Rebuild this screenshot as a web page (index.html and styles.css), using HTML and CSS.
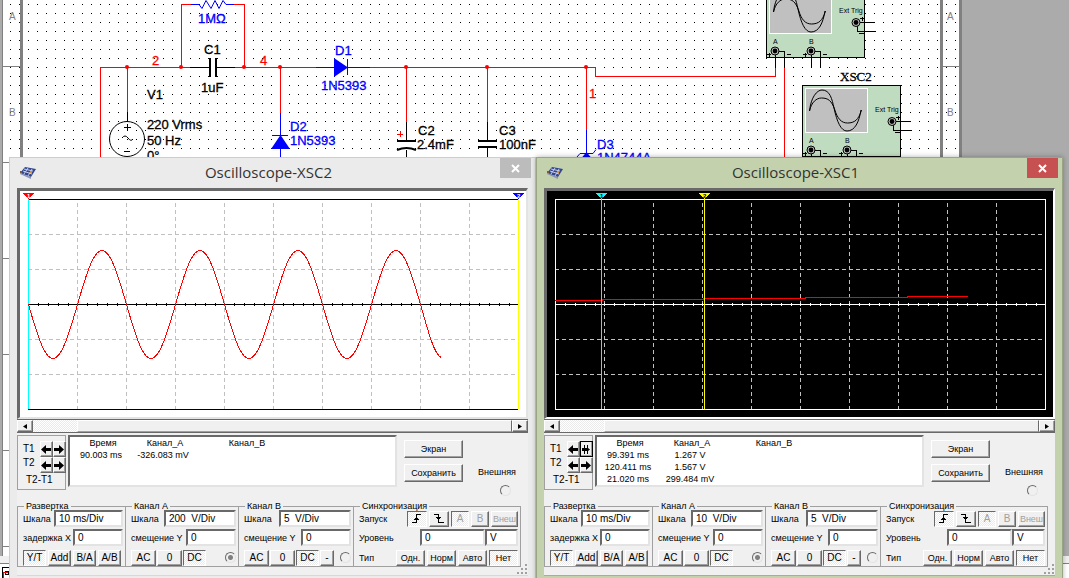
FILE: index.html
```html
<!DOCTYPE html>
<html lang="ru">
<head>
  <meta charset="UTF-8">
  <meta name="viewport" content="width=device-width, initial-scale=1.0">
  <title>Oscilloscope</title>
  <link rel="stylesheet" href="styles.css">
</head>
<body>
  <div class="desktop">
    <svg class="schematic" width="1069" height="578" viewBox="0 0 1069 578">
      <defs>
        <pattern id="dots" x="10" y="4" width="9" height="9" patternUnits="userSpaceOnUse">
          <rect width="1" height="1" fill="#000"/>
        </pattern>
        <g id="probe">
          <circle r="4" fill="#c0c0c0" stroke="#000"/>
          <circle r="2.4" fill="#000"/>
        </g>
        <g id="scope">
          <rect class="box" x="802.5" y="30.5" width="98" height="126" />
          <rect class="lcd" x="805.5" y="43.5" width="62" height="89"/>
          <path class="thin" d="M809.5 111C811 97 817 90 822 90c8 0 10 9 12 18 3 14 7 23 13 23 8 0 12-9 14-21M809.5 111c2-9 7-13 12-13 7 0 10 3 13 11 3 10 7 14 13 14 7 0 11-3 14-13"/>
          <g class="crisp">
            <path class="black" d="M892 121.500h19M893.500 121v9.500h18M811.500 149v18M811 150.500h9.500v16.500M847.500 149v18M847 150.500h9.500v16.500"/>
            <path class="black" d="M896 117.500h4M898.500 116v4M895 132.500h5M803 153.500h4M805.500 152v4M823 153.500h4M839 153.500h4M841.500 152v4M859 153.500h4"/>
          </g>
          <use href="#probe" x="892" y="121.500"/>
          <use href="#probe" x="811" y="150"/>
          <use href="#probe" x="847" y="150"/>
          <text class="tiny" x="875" y="112">Ext Trig</text>
          <text class="tiny" x="809" y="143">A</text>
          <text class="tiny" x="845" y="143">B</text>
        </g>
      </defs>

      <!-- sheet -->
      <rect x="3" y="0" width="959" height="556" fill="#fff"/>
      <rect x="3" y="0" width="959" height="556" fill="url(#dots)"/>
      <path fill="#808080" d="M2 0h1v556h-1zM20 0h3v556h-3zM940 0h3v556h-3zM959 0h3v556h-3z"/>
      <path class="tick" d="M3 66.500h17M3 162.500h17M3 258.500h17M3 354.500h17M3 450.500h17M3 546.500h17M943 66.500h16"/>
      <g class="zone">
        <text x="9" y="20">A</text><text x="9" y="116">B</text>
        <text x="947" y="20">A</text><text x="947" y="116">B</text>
      </g>
      <rect y="556" width="1069" height="22" fill="#f0f0f0"/>
      <rect y="564" width="1069" height="14" fill="#fff"/>
      <path class="tick" d="M0 563.500h1069"/>
      <path class="black crisp" d="M2.500 578v-10.500h6M5 571.500h3v3h-3z"/>
      <path class="red crisp" d="M3 578v-5.500h5"/>

      <!-- wires -->
      <g class="crisp">
        <path class="red" d="M191 4.500h-9.500V67M234 4.500h10.500V67M100.500 157V67.500H190M127.500 67v45M235 67.500h81M280.500 67v46M370 67.500h225.500v9h180V67M406.500 67v55M487.500 67v55M586.500 67v63M784.500 67v90"/>
        <path class="blue" d="M191 4.500h8M226 4.500h8M316 67.500h54M347.500 59v16M280.500 113v44M272 135.500h16M586.500 130v27"/>
        <path class="black" d="M190 67.500h19M217 67.500h18M127.500 112v9M406.500 122v18M487.500 122v18M406.500 150v8M487.500 148v9M124 127.500h7M127.500 124v7M124 151.500h6"/>
        <path class="red" d="M397 134.500h6M400.500 131v6"/>
        <path fill="#000" d="M209 58h2v19h-2zM215 58h2v19h-2zM397 140h19v2h-19zM478 140h19v2h-19zM478 146h19v2h-19z"/>
      </g>
      <path class="blue" d="M199 4.500l3 4 4-8 5 8 4-8 4 8 4-8 3 4M577 157l3-3.500h13l3-4"/>
      <path fill="#00f" d="M334 58l14 9.500-14 9.500zM271 149l9.500-14 9.500 14zM586.500 152l5 6h-10z"/>
      <path d="M397 150q9.500-4 19 0" fill="none" stroke="#000" stroke-width="2"/>
      <circle class="thin" cx="127" cy="139" r="17.500"/>
      <path class="thin" d="M122 138q3-4 6 0t5 1"/>
      <g fill="#f00">
        <circle cx="127" cy="67" r="2"/><circle cx="181" cy="67" r="2"/>
        <circle cx="244" cy="67" r="2"/><circle cx="280" cy="67" r="2"/>
        <circle cx="406" cy="67" r="2"/><circle cx="487" cy="67" r="2"/>
        <circle cx="586" cy="67" r="2"/>
      </g>

      <!-- labels -->
      <g class="label">
        <text x="204" y="54">C1</text><text x="201" y="92">1uF</text>
        <text x="147" y="99">V1</text><text x="147" y="129">220 Vrms</text>
        <text x="147" y="145">50 Hz</text><text x="147" y="160">0°</text>
        <text x="418" y="135">C2</text><text x="417" y="149">2.4mF</text>
        <text x="499" y="135">C3</text><text x="499" y="149">100nF</text>
      </g>
      <g class="label label-blue">
        <text x="198" y="23">1MΩ</text>
        <text x="335" y="55">D1</text><text x="321" y="90">1N5393</text>
        <text x="290" y="131">D2</text><text x="290" y="145">1N5393</text>
        <text x="597" y="149">D3</text><text x="597" y="162">1N4744A</text>
      </g>
      <g class="label label-red">
        <text x="152" y="65">2</text><text x="260" y="65">4</text><text x="589" y="98">1</text>
      </g>
      <use href="#scope" x="-36" y="-99"/>
      <clipPath id="lower"><rect x="800" y="85" width="120" height="80"/></clipPath>
      <use href="#scope" clip-path="url(#lower)"/>
      <path class="black crisp" d="M802 85.500h99"/>
      <path class="crisp" d="M805 88.500h63" fill="none" stroke="#fff"/>
      <path d="M803 86h97v2h-97z" fill="#c0dcc0"/>
      <text class="refdes" x="840" y="81">XSC2</text>
    </svg>

    <div class="windows">
      <section class="window">
        <header class="titlebar">
          <svg class="app-icon" width="18" height="14" viewBox="0 0 18 14">
            <path d="M6 2l11 2-5 8-11-4z" fill="#33478f"/><path d="M1 8l11 4v2L1 9z" fill="#8b93b5"/>
            <path d="M5 4l9 2M4 6l9 3M9 3L5 9M13 4l-4 7" stroke="#c4cbe8" fill="none"/>
            <path d="M11 6h2v2h-2z" fill="#e09030"/><path d="M1 6h2v2H1z" fill="#7d5a3c"/>
          </svg>
          <h1>Oscilloscope-XSC2</h1>
          <button class="close" aria-label="Close"><svg width="9" height="9" viewBox="0 0 9 9"><path d="M1 1l7 7M8 1l-7 7" stroke="#fff" stroke-width="2"/></svg></button>
        </header>
        <div class="client">
          <svg class="screen" viewBox="0 0 506 226">
            <path class="grid-line" d="M57.500 12v206M106.500 12v206M155.500 12v206M204.500 12v206M253.500 12v206M302.500 12v206M351.500 12v206M400.500 12v206M449.500 12v206M8 43.500h490M8 78.500h490M8 148.500h490M8 183.500h490"/>
            <path class="axis" d="M8 8.500h490M8 218.500h490M8 113.500h490"/>
            <path class="axis-ticks" d="M8 113h490"/>
            <path d="M8.500 8v210" stroke="#0ff"/><path d="M498.500 8v210" stroke="#ff0"/>
            <path class="trace" d="M8.500 113.500c8 27.700 15.600 54 24.500 54c8.900 0 16.500-26.300 24.500-54c8-27.700 15.600-54 24.500-54c8.900 0 16.500 26.300 24.500 54c8 27.700 15.600 54 24.500 54c8.900 0 16.500-26.300 24.500-54c8-27.700 15.600-54 24.500-54c8.900 0 16.500 26.300 24.500 54c8 27.700 15.600 54 24.500 54c8.900 0 16.500-26.300 24.500-54c8-27.700 15.600-54 24.500-54c8.900 0 16.500 26.300 24.500 54c8 27.700 15.600 54 24.500 54c8.900 0 16.500-26.300 24.500-54c8-27.700 15.600-54 24.500-54c8.900 0 16.500 26.300 24.500 54c7 24 13 49 20.500 53"/>
            <path d="M2 2h13l-6.500 6z" fill="#f00"/><text class="marker" x="7" y="7" fill="#fff">1</text>
            <path d="M492 2h13l-6.500 6z" fill="#00f"/><text class="marker" x="497" y="7" fill="#fff">2</text>
          </svg>
          <div class="scrollbar">
            <button aria-label="Left"><svg width="4" height="5" viewBox="0 0 4 5"><path d="M4 0v5L0 2.500z"/></svg></button>
            <div class="trough"></div><div class="thumb"></div>
            <button aria-label="Right"><svg width="4" height="5" viewBox="0 0 4 5"><path d="M0 0v5l4-2.500z"/></svg></button>
          </div>

          <div class="readout">
            <div class="cursors">
              <span>T1</span>
              <button aria-label="T1 left"><svg class="arrow" viewBox="0 0 10 9"><path d="M0 4.500L5 0v3h5v3H5v3z"/></svg></button>
              <button aria-label="T1 right"><svg class="arrow" viewBox="0 0 10 9"><path d="M10 4.500L5 0v3H0v3h5v3z"/></svg></button>
              <span class="second">T2</span>
              <button aria-label="T2 left"><svg class="arrow" viewBox="0 0 10 9"><path d="M0 4.500L5 0v3h5v3H5v3z"/></svg></button>
              <button aria-label="T2 right"><svg class="arrow" viewBox="0 0 10 9"><path d="M10 4.500L5 0v3H0v3h5v3z"/></svg></button>
              <span class="diff">T2-T1</span>
            </div>
            <div class="values">
              <table>
                <tr><th class="time">Время</th><th class="chan-a">Канал_A</th><th class="chan-b">Канал_B</th></tr>
                <tr><td>90.003 ms</td><td>-326.083 mV</td><td></td></tr>
              </table>
            </div>
            <div class="actions"><button>Экран</button><button>Сохранить</button></div>
            <label class="external">Внешняя <input type="radio" name="ext2"></label>
          </div>

          <div class="groups">
            <fieldset>
              <legend>Развертка</legend>
              <div class="row"><label for="scale2">Шкала</label><input class="scale" id="scale2" type="text" value="10 ms/Div"></div>
              <div class="row"><label for="delay2">задержка X</label><input class="offset" id="delay2" type="text" value="0"></div>
              <div class="row keys"><button class="pressed">Y/T</button><button>Add</button><button>B/A</button><button>A/B</button></div>
            </fieldset>
            <fieldset>
              <legend>Канал A</legend>
              <div class="row"><label for="a-scale2">Шкала</label><input class="scale" id="a-scale2" type="text" value="200  V/Div"></div>
              <div class="row"><label for="a-pos2">смещение Y</label><input class="offset" id="a-pos2" type="text" value="0"></div>
              <div class="row keys coupling"><button class="wide">AC</button><button class="wide">0</button><button class="pressed">DC</button><input type="radio" name="in-a2" aria-label="A" checked disabled></div>
            </fieldset>
            <fieldset>
              <legend>Канал B</legend>
              <div class="row"><label for="b-scale2">Шкала</label><input class="scale" id="b-scale2" type="text" value="5  V/Div"></div>
              <div class="row"><label for="b-pos2">смещение Y</label><input class="offset" id="b-pos2" type="text" value="0"></div>
              <div class="row keys coupling"><button class="wide">AC</button><button class="wide">0</button><button class="pressed">DC</button><button class="minus">-</button><input type="radio" name="in-b2" aria-label="B"></div>
            </fieldset>
            <fieldset class="sync">
              <legend>Синхронизация</legend>
              <div class="row keys"><span>Запуск</span>
                <button class="edge pressed" aria-label="Rising"><svg width="10" height="9" viewBox="0 0 10 9"><path d="M0 8.500h4.500v-8H9M2 5.500h5M3 4.500h3"/></svg></button>
                <button class="edge" aria-label="Falling"><svg width="10" height="9" viewBox="0 0 10 9"><path d="M0 .500h4.500v8H10M2 3.500h5M3 4.500h3"/></svg></button>
                <button class="source pressed" disabled>A</button><button class="source" disabled>B</button><button class="source-ext" disabled>Внеш</button></div>
              <div class="row"><label for="level2">Уровень</label><input class="level" id="level2" type="text" value="0"><input class="unit" type="text" value="V" aria-label="V"></div>
              <div class="row keys modes"><span>Тип</span><button>Одн.</button><button>Норм</button><button>Авто</button><button class="pressed">Нет</button></div>
            </fieldset>
          </div>
          <svg class="grip" width="11" height="11" viewBox="0 0 11 11"><path d="M8 0h2v2H8zM4 4h2v2H4zM8 4h2v2H8zM0 8h2v2H0zM4 8h2v2H4zM8 8h2v2H8z"/></svg>
        </div>
      </section>

      <section class="window active">
        <header class="titlebar">
          <svg class="app-icon" width="18" height="14" viewBox="0 0 18 14">
            <path d="M6 2l11 2-5 8-11-4z" fill="#33478f"/><path d="M1 8l11 4v2L1 9z" fill="#8b93b5"/>
            <path d="M5 4l9 2M4 6l9 3M9 3L5 9M13 4l-4 7" stroke="#c4cbe8" fill="none"/>
            <path d="M11 6h2v2h-2z" fill="#e09030"/><path d="M1 6h2v2H1z" fill="#7d5a3c"/>
          </svg>
          <h1>Oscilloscope-XSC1</h1>
          <button class="close" aria-label="Close"><svg width="9" height="9" viewBox="0 0 9 9"><path d="M1 1l7 7M8 1l-7 7" stroke="#fff" stroke-width="2"/></svg></button>
        </header>
        <div class="client">
          <svg class="screen dark" viewBox="0 0 506 226">
            <path class="grid-line" d="M57.500 12v206M106.500 12v206M155.500 12v206M204.500 12v206M253.500 12v206M302.500 12v206M351.500 12v206M400.500 12v206M449.500 12v206M8 43.500h490M8 78.500h490M8 148.500h490M8 183.500h490"/>
            <path class="axis" d="M8.500 8.500h490v210h-490zM8 113.500h490"/>
            <path class="axis-ticks" d="M8 113.500h490"/>
            <path class="trace" d="M8 109.500h47v-1h101v-1h102v-1h102v-1h61"/>
            <path d="M54.500 8v210" stroke="#0ff"/><path d="M157.500 8v210" stroke="#ff0"/>
            <path d="M48 2h13l-6.500 6z" fill="#0ff"/><text class="marker" x="53" y="7">1</text>
            <path d="M151 2h13l-6.500 6z" fill="#ff0"/><text class="marker" x="156" y="7">2</text>
          </svg>
          <div class="scrollbar">
            <button aria-label="Left"><svg width="4" height="5" viewBox="0 0 4 5"><path d="M4 0v5L0 2.500z"/></svg></button>
            <div class="trough"></div><div class="thumb"></div>
            <button aria-label="Right"><svg width="4" height="5" viewBox="0 0 4 5"><path d="M0 0v5l4-2.500z"/></svg></button>
          </div>

          <div class="readout">
            <div class="cursors">
              <span>T1</span>
              <button aria-label="T1 left"><svg class="arrow" viewBox="0 0 10 9"><path d="M0 4.500L5 0v3h5v3H5v3z"/></svg></button>
              <button class="focused" aria-label="T1 right"><svg class="arrow" viewBox="0 0 10 9"><path d="M3 0h1v3h2V0h1v3l2 1.500L7 6v3H6V6H4v3H3V6H1V3h2z"/></svg></button>
              <span class="second">T2</span>
              <button aria-label="T2 left"><svg class="arrow" viewBox="0 0 10 9"><path d="M0 4.500L5 0v3h5v3H5v3z"/></svg></button>
              <button aria-label="T2 right"><svg class="arrow" viewBox="0 0 10 9"><path d="M10 4.500L5 0v3H0v3h5v3z"/></svg></button>
              <span class="diff">T2-T1</span>
            </div>
            <div class="values">
              <table>
                <tr><th class="time">Время</th><th class="chan-a">Канал_A</th><th class="chan-b">Канал_B</th></tr>
                <tr><td>99.391 ms</td><td>1.267 V</td><td></td></tr>
                <tr><td>120.411 ms</td><td>1.567 V</td><td></td></tr>
                <tr><td>21.020 ms</td><td>299.484 mV</td><td></td></tr>
              </table>
            </div>
            <div class="actions"><button>Экран</button><button>Сохранить</button></div>
            <label class="external">Внешняя <input type="radio" name="ext1"></label>
          </div>

          <div class="groups">
            <fieldset>
              <legend>Развертка</legend>
              <div class="row"><label for="scale1">Шкала</label><input class="scale" id="scale1" type="text" value="10 ms/Div"></div>
              <div class="row"><label for="delay1">задержка X</label><input class="offset" id="delay1" type="text" value="0"></div>
              <div class="row keys"><button class="pressed">Y/T</button><button>Add</button><button>B/A</button><button>A/B</button></div>
            </fieldset>
            <fieldset>
              <legend>Канал A</legend>
              <div class="row"><label for="a-scale1">Шкала</label><input class="scale" id="a-scale1" type="text" value="10  V/Div"></div>
              <div class="row"><label for="a-pos1">смещение Y</label><input class="offset" id="a-pos1" type="text" value="0"></div>
              <div class="row keys coupling"><button class="wide">AC</button><button class="wide">0</button><button class="pressed">DC</button><input type="radio" name="in-a1" aria-label="A" checked disabled></div>
            </fieldset>
            <fieldset>
              <legend>Канал B</legend>
              <div class="row"><label for="b-scale1">Шкала</label><input class="scale" id="b-scale1" type="text" value="5  V/Div"></div>
              <div class="row"><label for="b-pos1">смещение Y</label><input class="offset" id="b-pos1" type="text" value="0"></div>
              <div class="row keys coupling"><button class="wide">AC</button><button class="wide">0</button><button class="pressed">DC</button><button class="minus">-</button><input type="radio" name="in-b1" aria-label="B"></div>
            </fieldset>
            <fieldset class="sync">
              <legend>Синхронизация</legend>
              <div class="row keys"><span>Запуск</span>
                <button class="edge pressed" aria-label="Rising"><svg width="10" height="9" viewBox="0 0 10 9"><path d="M0 8.500h4.500v-8H9M2 5.500h5M3 4.500h3"/></svg></button>
                <button class="edge" aria-label="Falling"><svg width="10" height="9" viewBox="0 0 10 9"><path d="M0 .500h4.500v8H10M2 3.500h5M3 4.500h3"/></svg></button>
                <button class="source pressed" disabled>A</button><button class="source" disabled>B</button><button class="source-ext" disabled>Внеш</button></div>
              <div class="row"><label for="level1">Уровень</label><input class="level" id="level1" type="text" value="0"><input class="unit" type="text" value="V" aria-label="V"></div>
              <div class="row keys modes"><span>Тип</span><button>Одн.</button><button>Норм</button><button>Авто</button><button class="pressed">Нет</button></div>
            </fieldset>
          </div>
          <svg class="grip" width="11" height="11" viewBox="0 0 11 11"><path d="M8 0h2v2H8zM4 4h2v2H4zM8 4h2v2H8zM0 8h2v2H0zM4 8h2v2H4zM8 8h2v2H8z"/></svg>
        </div>
      </section>
    </div>
  </div>
</body>
</html>
```
FILE: styles.css
```css
* {
  box-sizing: border-box;
}
body {
  margin: 0;
  background-color: #ababab;
  font-family: "Liberation Sans", Arial, sans-serif;
  font-size: 9px;
  color: #000;
}
.desktop {
  position: relative;
  height: 100vh;
  overflow: hidden;
}

/* schematic */
.schematic {
  position: absolute;
  top: 0;
  left: 0;
}
.crisp {
  shape-rendering: crispEdges;
}
.red, .blue, .black, .thin, .tick {
  fill: none;
  stroke: #f00;
}
.blue {
  stroke: #00f;
}
.black, .thin {
  stroke: #000;
}
.tick {
  stroke: #808080;
}
.zone {
  font-size: 10px;
  fill: #808080;
}
.label {
  font-size: 13px;
  stroke: #000;
  stroke-width: 0.3px;
}
.label-blue {
  fill: #00f;
  stroke: #00f;
}
.label-red {
  fill: #f00;
  stroke: #f00;
}
.box {
  fill: #c0dcc0;
  stroke: #000;
}
.lcd {
  fill: #c0c0c0;
  stroke: #fff;
}
.tiny {
  font-size: 7px;
}
.refdes {
  font-family: "Liberation Serif", "Times New Roman", serif;
  font-size: 13px;
  stroke: #000;
  stroke-width: 0.3px;
}

/* windows */
.windows {
  position: absolute;
  top: 157px;
  left: 9px;
  right: 6px;
  display: grid;
  grid-template-columns: 1fr 1fr;
}
.window {
  height: 440px;
  padding: 0 7px;
  background-color: #ebebeb;
  border: 1px solid #cdcdcd;
}
.active {
  background-color: #c4d1ad;
  border-color: #9aa585;
  box-shadow: 0 0 5px rgba(0, 0, 0, 0.3);
}
.titlebar {
  display: flex;
  align-items: flex-start;
  height: 30px;
}
.titlebar h1 {
  flex: 1;
  margin: 0;
  font-family: "Open Sans", "Noto Sans", sans-serif;
  font-size: 15px;
  font-weight: normal;
  line-height: 28px;
  text-align: center;
  color: #333;
}
.app-icon {
  margin: 7px 0 0 2px;
}
.close {
  display: flex;
  align-items: center;
  justify-content: center;
  width: 31px;
  height: 20px;
  margin-right: -3px;
  padding: 0;
  border: none;
  box-shadow: none;
  background-color: #bcbcbc;
}
.active .close {
  background-color: #c75050;
}
.client {
  position: relative;
  height: 388px;
  background-color: #f0f0f0;
  border-bottom: 1px solid #d8d8d8;
}
.active .client {
  border-bottom-color: #a5b18e;
}

/* plot */
.screen {
  display: block;
  width: 100%;
  height: auto;
  background-color: #fff;
  border: solid;
  border-width: 3px 2px 2px 3px;
  border-color: #696969 #e3e3e3 #e3e3e3 #696969;
  shape-rendering: crispEdges;
}
.dark {
  background-color: #000;
  border-right-color: #fff;
  border-bottom-color: #fff;
}
.grid-line {
  stroke: #c0c0c0;
  stroke-dasharray: 4 3;
}
.axis {
  fill: none;
  stroke: #000;
}
.axis-ticks {
  stroke: #000;
  stroke-width: 3px;
  stroke-dasharray: 1 9 1 9 1 9 1 9 1 8;
}
.dark .axis, .dark .axis-ticks {
  stroke: #fff;
}
.trace {
  fill: none;
  stroke: #f00;
}
.marker {
  font-size: 6px;
  font-weight: bold;
}

/* buttons and boxes */
button {
  padding: 0;
  font: 10px "Liberation Sans", Arial, sans-serif;
  color: #000;
  background-color: #f0f0f0;
  border: 1px solid;
  border-color: #fff #696969 #696969 #fff;
  box-shadow: inset -1px -1px #a0a0a0;
}
button:disabled {
  color: #a0a0a0;
}
.pressed {
  border-color: #696969 #fff #fff #696969;
  box-shadow: none;
}
.pressed, .trough {
  background: repeating-conic-gradient(#fff 0 25%, #eaeaea 0 50%) 0 0 / 2px 2px;
}
input[type="text"] {
  min-width: 0;
  height: 17px;
  padding: 0 0 0 3px;
  font: 10px "Liberation Sans", Arial, sans-serif;
  background-color: #fff;
  border: 2px solid;
  border-color: #696969 #e3e3e3 #e3e3e3 #696969;
}
input[type="radio"] {
  appearance: none;
  width: 11px;
  height: 11px;
  margin: 0;
  border: 1px solid;
  border-color: #696969 #e3e3e3 #e3e3e3 #696969;
  border-radius: 50%;
}
input[type="radio"]:checked {
  background: radial-gradient(#808080 2px, transparent 3px);
}
.scrollbar {
  display: flex;
  height: 14px;
  border-top: 1px solid #696969;
  border-bottom: 1px solid #696969;
}
.scrollbar button {
  display: flex;
  align-items: center;
  justify-content: center;
  width: 16px;
}
.trough {
  width: 44px;
}
.thumb {
  flex: 1;
  border: 1px solid;
  border-color: #fff #696969 #a0a0a0 #fff;
}

/* cursor readout */
.readout {
  display: flex;
  gap: 2px;
  margin-top: 2px;
}
.cursors {
  display: grid;
  grid-template-columns: 17px 13px 13px;
  grid-template-rows: 16px 16px 12px;
  align-items: center;
  width: 49px;
  height: 55px;
  padding: 5px 0 0 5px;
  font-size: 10px;
  border: 1px solid #a0a0a0;
}
.cursors span {
  line-height: 12px;
}
.cursors .second {
  align-self: start;
}
.cursors button {
  height: 16px;
}
.cursors .focused {
  border-color: #000;
}
.arrow {
  display: block;
  width: 10px;
  height: 9px;
}
.diff {
  grid-column: 1 / 4;
  padding: 2px 0 0 3px;
}
.values {
  flex: 1;
  height: 52px;
  background-color: #fff;
  border: 2px solid;
  border-color: #696969 #e3e3e3 #e3e3e3 #696969;
}
table {
  border-collapse: collapse;
}
th, td {
  height: 12px;
  padding: 0;
  font-weight: normal;
  line-height: 12px;
  text-align: center;
  white-space: nowrap;
}
th {
  padding-left: 4px;
}
.time {
  width: 62px;
}
.chan-a {
  width: 62px;
}
.chan-b {
  width: 102px;
}
.actions {
  display: flex;
  flex-direction: column;
  gap: 6px;
  width: 59px;
  margin: 5px 0 0 5px;
}
.actions button {
  height: 18px;
  font-size: 9px;
}
.external {
  display: flex;
  flex-direction: column;
  align-items: center;
  gap: 8px;
  width: 52px;
  margin: 32px 5px 0 6px;
}
.external input {
  margin-left: 16px;
}

/* settings */
.groups {
  display: grid;
  grid-template-columns: 108fr 113fr 115fr 168fr;
  margin: 5px 7px 0 0;
}
fieldset {
  min-width: 0;
  height: 66px;
  margin: 0;
  padding: 0 2px 0 5px;
  border: 1px solid #a0a0a0;
  border-right: none;
}
.sync {
  border-right: 1px solid #a0a0a0;
}
legend {
  margin: 0 0 -2px 1px;
  padding: 0 2px;
  line-height: 11px;
}
.row {
  display: flex;
  align-items: center;
  justify-content: space-between;
  height: 17px;
  margin-bottom: 2px;
  white-space: nowrap;
}
.keys {
  justify-content: flex-start;
  gap: 2px;
}
.keys button {
  display: flex;
  align-items: center;
  justify-content: center;
  width: 23px;
  height: 16px;
}
.row:last-child {
  margin: 3px 0 0;
}
.scale {
  width: 72px;
}
.offset {
  width: 50px;
}
fieldset:first-of-type .scale {
  width: 69px;
}
.coupling {
  gap: 1px;
}
.keys .wide {
  width: 25px;
}
.keys .minus {
  width: 14px;
}
.coupling input {
  margin-left: auto;
}
.sync .keys span {
  margin-right: auto;
}
.keys .edge {
  width: 20px;
}
.edge path {
  fill: none;
  stroke: #000;
  shape-rendering: crispEdges;
}
.keys .source {
  width: 18px;
}
.keys .source-ext {
  width: 27px;
  font-size: 9px;
}
.level {
  width: 65px;
  margin-left: auto;
}
.unit {
  width: 33px;
}
.modes button {
  width: 29px;
  font-size: 9px;
}
.grip {
  position: absolute;
  right: 0;
  bottom: 0;
  fill: #a0a0a0;
}
```
